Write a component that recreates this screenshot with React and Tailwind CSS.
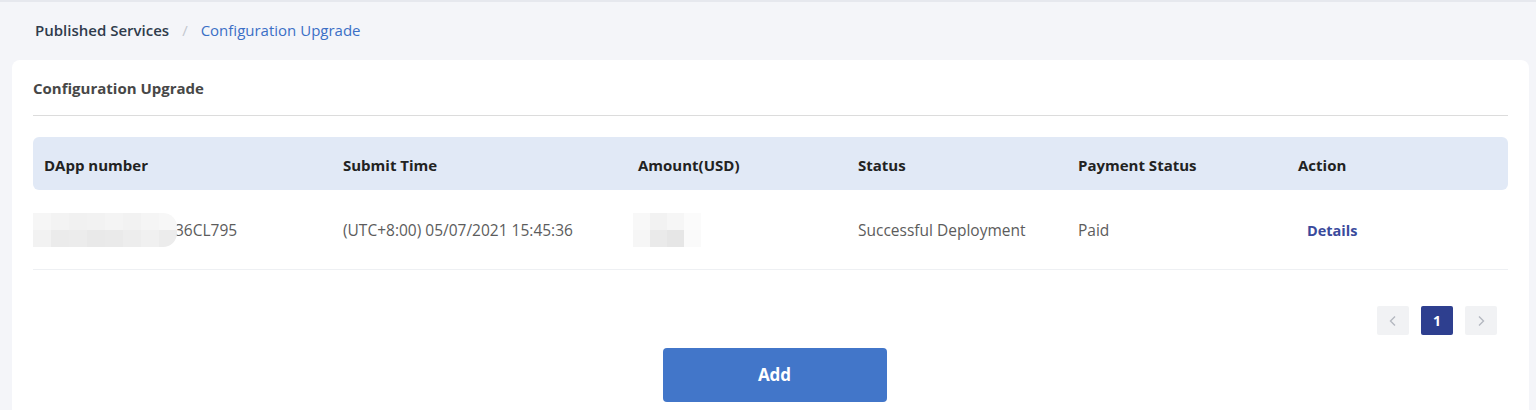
const dappBlur = [
  ['#f6f6f6', '#f3f3f3', '#f1f1f1', '#f2f2f2', '#f4f4f4', '#f2f2f2', '#f5f5f5', '#f7f7f7'],
  ['#f2f2f2', '#ebebeb', '#ececec', '#e9e9e9', '#eaeaea', '#ededed', '#f0f0f0', '#ececec'],
];

const amountBlur = [
  ['#f8f8f8', '#f2f2f2', '#f6f6f6', '#fbfbfb'],
  ['#f6f6f6', '#eaeaea', '#e6e6e6', '#fafafa'],
];

function BlurBlock({ rows, cell, className }) {
  return (
    <div className={`absolute flex flex-col overflow-hidden ${className}`}>
      {rows.map((row, r) => (
        <div key={r} className="flex">
          {row.map((c, i) => (
            <div key={i} style={{ background: c, width: cell, height: 17 }} />
          ))}
        </div>
      ))}
    </div>
  );
}

const columns = ['DApp number', 'Submit Time', 'Amount(USD)', 'Status', 'Payment Status', 'Action'];

export default function App() {
  return (
    <div
      className="min-h-[410px] border-t-2 border-[#e6e8ee] bg-[#f4f5f9] text-[15px]"
      style={{ fontFamily: '"Open Sans", "Noto Sans", sans-serif' }}
    >
      <div className="flex h-[58px] items-center pb-[1px] pl-[35px]">
        <span className="font-semibold text-[#2f3b4c]">Published Services</span>
        <span className="mx-[13px] text-[#c3c7cf]">/</span>
        <span className="text-[#3b6fc6]">Configuration Upgrade</span>
      </div>

      <div className="ml-[12px] mr-[7px] rounded-[8px] bg-white px-[21px] pb-[20px]">
        <div className="flex h-[56px] items-center border-b border-[#dcdcdc] pt-[1px]">
          <span className="font-bold text-[#474747]">Configuration Upgrade</span>
        </div>

        <div className="mt-[21px]">
          <div className="grid h-[53px] grid-cols-[299px_295px_220px_220px_220px_1fr] items-center rounded-[6px] bg-[#e1e9f6] pt-[3px] font-bold text-[#222]">
            {columns.map((c) => (
              <div key={c} className="pl-[11px]">
                {c}
              </div>
            ))}
          </div>

          <div className="grid h-[80px] grid-cols-[299px_295px_220px_220px_220px_1fr] items-center border-b border-[#eef0f3] pt-[2px] text-[15.5px] text-[#5c5c5c]">
            <div className="relative h-[35px]">
              <BlurBlock rows={dappBlur} cell={18} className="left-0 top-0 rounded-r-[14px]" />
              <span className="block pl-[142px] leading-[35px]">36CL795</span>
            </div>
            <div className="pl-[11px]">(UTC+8:00) 05/07/2021 15:45:36</div>
            <div className="relative h-[35px]">
              <BlurBlock rows={amountBlur} cell={17} className="left-[6px] top-0" />
            </div>
            <div className="pl-[11px]">Successful Deployment</div>
            <div className="pl-[11px]">Paid</div>
            <div className="pl-[20px] text-[14.5px] font-bold text-[#3a4a9c]">Details</div>
          </div>

          <div className="mt-[36px] flex justify-end gap-[12px] pr-[11px]">
            <button className="flex h-[29px] w-[32px] items-center justify-center rounded-[2px] bg-[#f1f2f4] text-[#b4b8c0]">
              <svg width="10" height="12" viewBox="0 0 10 12" fill="none" stroke="currentColor" strokeWidth="1.4">
                <path d="M7 1.5 2.5 6 7 10.5" />
              </svg>
            </button>
            <button className="flex h-[29px] w-[32px] items-center justify-center rounded-[2px] bg-[#2e3f8f] text-[14px] font-bold text-white">
              1
            </button>
            <button className="flex h-[29px] w-[32px] items-center justify-center rounded-[2px] bg-[#f1f2f4] text-[#b4b8c0]">
              <svg width="10" height="12" viewBox="0 0 10 12" fill="none" stroke="currentColor" strokeWidth="1.4">
                <path d="M3 1.5 7.5 6 3 10.5" />
              </svg>
            </button>
          </div>

          <div className="mt-[13px] flex justify-center pl-[8px]">
            <button className="h-[54px] w-[224px] rounded-[4px] bg-[#4276c9] text-[17px] font-bold text-white">
              Add
            </button>
          </div>
        </div>
      </div>
    </div>
  );
}
